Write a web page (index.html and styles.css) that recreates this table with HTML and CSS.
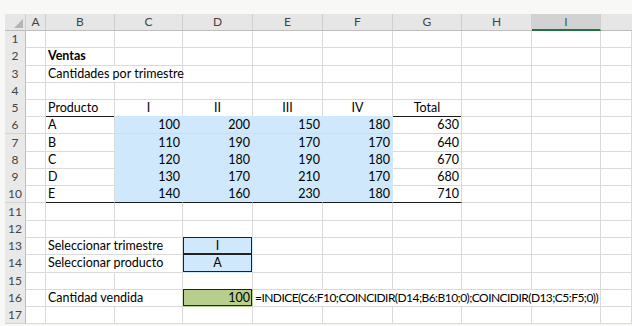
FILE: index.html
```html
<!DOCTYPE html>
<html lang="es">
<head>
<meta charset="utf-8">
<title>Ventas</title>
<link rel="stylesheet" href="styles.css">
</head>
<body>
<div class="sheet">
  <div class="row head">
    <div class="corner"><span class="tri"></span></div>
    <div class="ch">A</div><div class="ch">B</div><div class="ch">C</div><div class="ch">D</div><div class="ch">E</div><div class="ch">F</div><div class="ch">G</div><div class="ch">H</div><div class="ch sel">I</div><div class="ch last"></div>
  </div>
  <div class="row">
    <div class="rh">1</div><div class="c"></div><div class="c"></div><div class="c"></div><div class="c"></div><div class="c"></div><div class="c"></div><div class="c"></div><div class="c"></div><div class="c"></div><div class="c"></div>
  </div>
  <div class="row">
    <div class="rh">2</div><div class="c"></div><div class="c ov b">Ventas</div><div class="c"></div><div class="c"></div><div class="c"></div><div class="c"></div><div class="c"></div><div class="c"></div><div class="c"></div><div class="c"></div>
  </div>
  <div class="row">
    <div class="rh">3</div><div class="c"></div><div class="c ov span2">Cantidades por trimestre</div><div class="c"></div><div class="c"></div><div class="c"></div><div class="c"></div><div class="c"></div><div class="c"></div><div class="c"></div>
  </div>
  <div class="row">
    <div class="rh">4</div><div class="c"></div><div class="c"></div><div class="c"></div><div class="c"></div><div class="c"></div><div class="c"></div><div class="c"></div><div class="c"></div><div class="c"></div><div class="c"></div>
  </div>
  <div class="row">
    <div class="rh">5</div><div class="c"></div><div class="c bb">Producto</div><div class="c bb ctr">I</div><div class="c bb ctr">II</div><div class="c bb ctr">III</div><div class="c bb ctr">IV</div><div class="c bb ctr">Total</div><div class="c"></div><div class="c"></div><div class="c"></div>
  </div>
  <div class="row">
    <div class="rh">6</div><div class="c"></div><div class="c">A</div><div class="c blue num">100</div><div class="c blue num">200</div><div class="c blue num">150</div><div class="c blue num">180</div><div class="c num">630</div><div class="c"></div><div class="c"></div><div class="c"></div>
  </div>
  <div class="row">
    <div class="rh">7</div><div class="c"></div><div class="c">B</div><div class="c blue num">110</div><div class="c blue num">190</div><div class="c blue num">170</div><div class="c blue num">170</div><div class="c num">640</div><div class="c"></div><div class="c"></div><div class="c"></div>
  </div>
  <div class="row">
    <div class="rh">8</div><div class="c"></div><div class="c">C</div><div class="c blue num">120</div><div class="c blue num">180</div><div class="c blue num">190</div><div class="c blue num">180</div><div class="c num">670</div><div class="c"></div><div class="c"></div><div class="c"></div>
  </div>
  <div class="row">
    <div class="rh">9</div><div class="c"></div><div class="c">D</div><div class="c blue num">130</div><div class="c blue num">170</div><div class="c blue num">210</div><div class="c blue num">170</div><div class="c num">680</div><div class="c"></div><div class="c"></div><div class="c"></div>
  </div>
  <div class="row">
    <div class="rh">10</div><div class="c"></div><div class="c bb">E</div><div class="c blue num bb">140</div><div class="c blue num bb">160</div><div class="c blue num bb">230</div><div class="c blue num bb">180</div><div class="c num bb">710</div><div class="c"></div><div class="c"></div><div class="c"></div>
  </div>
  <div class="row">
    <div class="rh">11</div><div class="c"></div><div class="c"></div><div class="c"></div><div class="c"></div><div class="c"></div><div class="c"></div><div class="c"></div><div class="c"></div><div class="c"></div><div class="c"></div>
  </div>
  <div class="row">
    <div class="rh">12</div><div class="c"></div><div class="c"></div><div class="c"></div><div class="c"></div><div class="c"></div><div class="c"></div><div class="c"></div><div class="c"></div><div class="c"></div><div class="c"></div>
  </div>
  <div class="row">
    <div class="rh">13</div><div class="c"></div><div class="c ov span2">Seleccionar trimestre</div><div class="c boxed blue ctr">I</div><div class="c"></div><div class="c"></div><div class="c"></div><div class="c"></div><div class="c"></div><div class="c"></div>
  </div>
  <div class="row">
    <div class="rh">14</div><div class="c"></div><div class="c ov span2">Seleccionar producto</div><div class="c boxed blue ctr">A</div><div class="c"></div><div class="c"></div><div class="c"></div><div class="c"></div><div class="c"></div><div class="c"></div>
  </div>
  <div class="row">
    <div class="rh">15</div><div class="c"></div><div class="c"></div><div class="c"></div><div class="c"></div><div class="c"></div><div class="c"></div><div class="c"></div><div class="c"></div><div class="c"></div><div class="c"></div>
  </div>
  <div class="row">
    <div class="rh">16</div><div class="c"></div><div class="c ov span2">Cantidad vendida</div><div class="c boxed green num">100</div><div class="c ov span5 formula">=INDICE(C6:F10;COINCIDIR(D14;B6:B10;0);COINCIDIR(D13;C5:F5;0))</div><div class="c"></div>
  </div>
  <div class="row">
    <div class="rh">17</div><div class="c"></div><div class="c"></div><div class="c"></div><div class="c"></div><div class="c"></div><div class="c"></div><div class="c"></div><div class="c"></div><div class="c"></div><div class="c"></div>
  </div>
</div>
</body>
</html>
```
FILE: styles.css
```css
* { box-sizing: border-box; }
html, body { margin: 0; padding: 0; }
body {
  background: #f8f8f7;
  width: 632px;
  height: 326px;
  overflow: hidden;
  font-family: Lato, "Liberation Sans", sans-serif;
  font-size: 12.5px;
  color: #000;
}
.sheet {
  margin: 14px 0 0 5px;
  background: #fff;
}
.row {
  display: grid;
  grid-template-columns: 21px 20px 69px 68px 70px 70px 70px 69px 70px 69px 1fr;
  height: 17.25px;
}
.row.head { height: 16px; }
.corner, .ch {
  background: #e6e6e6;
  border-right: 1px solid #cfcfcf;
  border-bottom: 1px solid #bdbdbd;
  color: #444;
  text-align: center;
  line-height: 15px;
  font-size: 12px;
  position: relative;
}
.ch.sel {
  background: #d2d2d2;
  border-bottom: 2px solid #217346;
  color: #3d5a49;
}
.ch.last { border-right: none; }
.tri {
  position: absolute;
  right: 2px;
  bottom: 2px;
  width: 0;
  height: 0;
  border-left: 9px solid transparent;
  border-bottom: 9px solid #b4b4b4;
}
.rh {
  background: #e9e9e9;
  border-right: 1px solid #bdbdbd;
  border-bottom: 1px solid #d4d4d4;
  color: #444;
  font-size: 12px;
  text-align: center;
  padding-top: 1px;
  line-height: 16px;
}
.c {
  border-right: 1px solid #dadada;
  border-bottom: 1px solid #dadada;
  padding: 1px 2px 0;
  line-height: 16.25px;
  white-space: nowrap;
  overflow: hidden;
}
.ov { overflow: visible; }
.span2 { grid-column: span 2; }
.span5 { grid-column: span 5; }
.b { font-weight: bold; }
.ctr { text-align: center; }
.num { text-align: right; }
.formula {
  font-size: 12px;
  letter-spacing: -0.55px;
}
.blue {
  background: #cfe8fb;
  border-right-color: #cfe8fb;
}
.green {
  background: #b7cf8d;
}
.bb { border-bottom-color: #1a1a1a; }
.boxed {
  box-shadow: inset 0 0 0 1px #222;
  border-right-color: transparent;
  border-bottom-color: transparent;
}
```
